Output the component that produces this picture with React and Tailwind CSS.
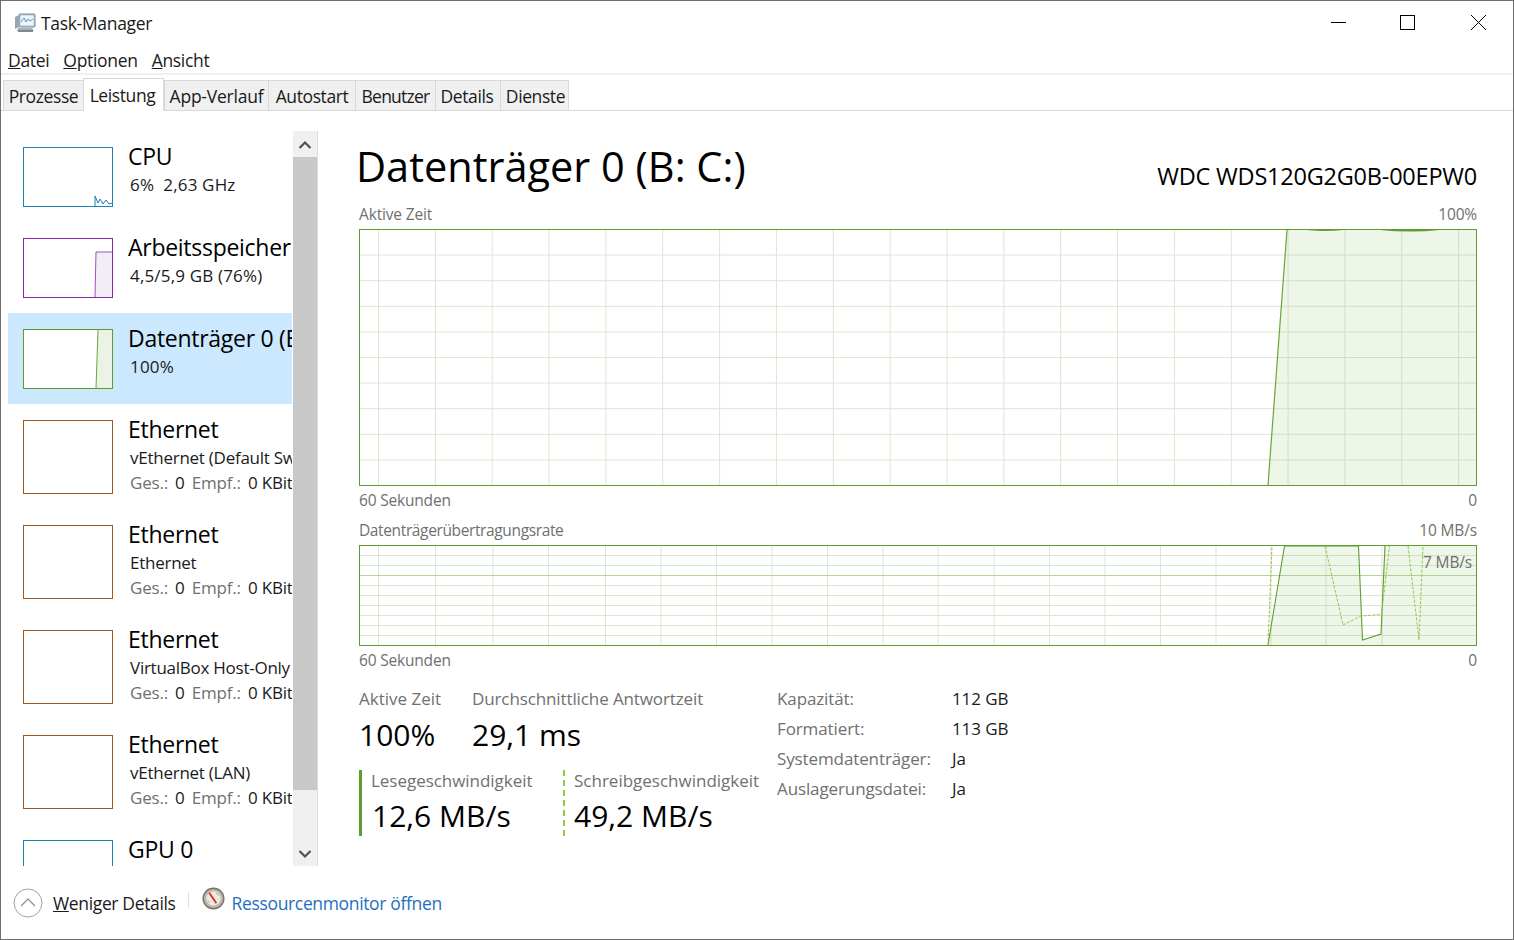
import React from "react";

const topV = Array.from({ length: 20 }, (_, i) => 18.5 + i * 56.85);
const topH = Array.from({ length: 9 }, (_, i) => 25.6 * (i + 1));
const lowV = [18.5, 75.5, 133, 188.5, 245.5, 301, 356.5, 412, 467.5, 523, 578, 634, 689.5, 745, 800.5, 856, 911, 966, 1022];
const lowH = [10, 20, 30, 40, 50, 60, 70, 80, 90];

function Chart1() {
  return (
    <div className="h-[257px] w-[1118px] border border-[#5f9c30]">
      <svg width="1116" height="255" viewBox="0 0 1116 255" className="block">
        {topV.map((x) => (
          <line key={x} x1={x} y1="0" x2={x} y2="255" stroke="#dde5d3" strokeWidth="1" />
        ))}
        {topH.map((y) => (
          <line key={y} x1="0" y1={y - 0.5} x2="1116" y2={y - 0.5} stroke="#dde5d3" strokeWidth="1" />
        ))}
        <polygon points="908,255 927,0 1116,0 1116,255" fill="#88c060" fillOpacity="0.14" />
        <polyline points="908,255 927,0" fill="none" stroke="#6aa63a" strokeWidth="1.2" />
        <path d="M947 0 Q965 2 983 0 Z" fill="#5f9c30" />
        <path d="M1020 0 Q1050 3 1080 0 Z" fill="#5f9c30" />
      </svg>
    </div>
  );
}

function Chart2() {
  return (
    <div className="relative h-[101px] w-[1118px] border border-[#5f9c30]">
      <svg width="1116" height="99" viewBox="0 0 1116 99" className="block">
        {lowV.map((x) => (
          <line key={x} x1={x} y1="0" x2={x} y2="99" stroke="#dde5d3" strokeWidth="1" />
        ))}
        {lowH.map((y) => (
          <line key={y} x1="0" y1={y - 0.5} x2="1116" y2={y - 0.5} stroke={y === 30 ? "#b4d69c" : "#dce6cf"} strokeWidth="1" />
        ))}
        <polygon points="908,99 924.5,0 998.5,0 1002.5,94 1021,88 1025,0 1116,0 1116,99" fill="#88c060" fillOpacity="0.14" />
        <polyline points="908,99 924.5,0 998.5,0 1002.5,94 1021,88 1025,0" fill="none" stroke="#5f9c30" strokeWidth="1.1" />
        <polyline points="908,99 912,0" fill="none" stroke="#8fcb45" strokeWidth="1" strokeDasharray="3 1.5" />
        <polyline points="965,0 983,79 1001,70 1021.5,68.5 1029.5,0" fill="none" stroke="#8fcb45" strokeWidth="1" strokeDasharray="3 1.5" />
        <polyline points="1048,0 1059,94 1063,0" fill="none" stroke="#8fcb45" strokeWidth="1" strokeDasharray="3 1.5" />
      </svg>
      <span className="absolute right-[4px] top-[6px] text-[15.5px] leading-[20px] tracking-[-0.01em] text-[#707070]">7 MB/s</span>
    </div>
  );
}

function Thumb({ color, h = "h-[60px]", children }) {
  return (
    <div className={`mt-[7px] w-[90px] shrink-0 border bg-white ${h}`} style={{ borderColor: color }}>
      <svg width="88" height="100%" className="block h-full">
        {children}
      </svg>
    </div>
  );
}

function Row({ thumb, name, sub, third, selected, tall }) {
  return (
    <div className={`flex w-[284px] shrink-0 overflow-hidden pl-[15px] pt-[9px] ${tall ? "h-[105px]" : "h-[91px]"} ${selected ? "bg-[#cce8ff]" : ""}`}>
      {thumb}
      <div className="ml-[15px] min-w-0 flex-1 whitespace-nowrap">
        <div className="h-[33px] text-[23px] leading-[32px] tracking-[-0.012em] text-black">{name}</div>
        {sub && <div className={`ml-[2px] h-[24px] whitespace-pre text-[17px] leading-[24px] text-[#1a1a1a] ${third ? "tracking-[-0.015em]" : "tracking-[0.01em]"}`}>{sub}</div>}
        {third && (
          <div className="ml-[2px] h-[25px] text-[17px] leading-[25px] tracking-[-0.01em]">
            <span className="text-[#707070]">Ges.:</span>
            <span className="ml-[7px] text-[#1a1a1a]">0</span>
            <span className="ml-[7px] text-[#707070]">Empf.:</span>
            <span className="ml-[7px] text-[#1a1a1a]">0 KBit/s</span>
          </div>
        )}
      </div>
    </div>
  );
}

function TaskIcon() {
  return (
    <svg width="22" height="20" viewBox="0 0 22 20">
      <rect x="5" y="1" width="16" height="13" rx="1" fill="#b9c6d4" stroke="#7d8a98" strokeWidth="1" />
      <rect x="6.5" y="2.5" width="13" height="10" fill="#eef4fa" />
      <polyline points="7,9 10,5 12,9 14,6 16,8 19,6" fill="none" stroke="#4b9bd0" strokeWidth="1" />
      <path d="M1 4 L5 2 V14 L1 16 Z" fill="#9aa4ae" />
      <path d="M4 15 H18 L20 18 H3 Z" fill="#a9b0b8" />
      <rect x="4" y="17" width="15" height="2" fill="#7f8890" />
    </svg>
  );
}

function Gauge() {
  return (
    <svg width="23" height="23" viewBox="0 0 24 24">
      <circle cx="12" cy="12" r="11.5" fill="#77746f" />
      <circle cx="12" cy="12" r="10" fill="#bdb8ae" />
      <circle cx="12" cy="12" r="7.5" fill="#efe9df" />
      <line x1="7.5" y1="6" x2="15" y2="17" stroke="#cf3a30" strokeWidth="2" />
      <line x1="15" y1="6.5" x2="17.5" y2="9" stroke="#8f8f8f" strokeWidth="1" />
      <line x1="6" y1="14" x2="8" y2="16.5" stroke="#a8a8a8" strokeWidth="1" />
    </svg>
  );
}

const tabs = [
  ["Prozesse", "w-[80px]"],
  ["Leistung", "w-[81px] pr-[2px]"],
  ["App-Verlauf", "w-[104px] tracking-[-0.0125em]"],
  ["Autostart", "w-[87px]"],
  ["Benutzer", "w-[80px] tracking-[-0.044em]"],
  ["Details", "w-[65px] pr-[2px]"],
  ["Dienste", "w-[69px] pl-[2px]"],
];

export default function App() {
  return (
    <div className="flex h-[940px] w-[1514px] flex-col overflow-hidden border border-[#6e6e6e] bg-white font-['Open_Sans','Noto_Sans',sans-serif] tracking-[-0.02em] text-black">
      {/* title bar */}
      <div className="flex h-[43px] shrink-0 items-center pl-[13px] pr-[27px]">
        <TaskIcon />
        <span className="ml-[5px] pt-[2px] text-[17.5px] text-[#1a1a1a]">Task-Manager</span>
        <svg width="15" height="15" viewBox="0 0 15 15" className="ml-auto">
          <line x1="0" y1="7.5" x2="15" y2="7.5" stroke="#000" strokeWidth="1" />
        </svg>
        <svg width="15" height="15" viewBox="0 0 15 15" className="ml-[54px]">
          <rect x="0.5" y="0.5" width="14" height="14" fill="none" stroke="#000" strokeWidth="1" />
        </svg>
        <svg width="15" height="15" viewBox="0 0 15 15" className="ml-[56px]">
          <path d="M0 0 L15 15 M15 0 L0 15" stroke="#000" strokeWidth="1" />
        </svg>
      </div>
      {/* menu */}
      <div className="flex h-[31px] shrink-0 items-center border-b-2 border-[#f0f0f0] pl-[7px] pt-[3px] text-[17.5px] leading-[27px] tracking-[-0.018em] text-[#1a1a1a]">
        <span><u>D</u>atei</span>
        <span className="ml-[14px]"><u>O</u>ptionen</span>
        <span className="ml-[14px]"><u>A</u>nsicht</span>
      </div>
      {/* tabs */}
      <div className="flex h-[36px] shrink-0 items-end border-b border-[#d9d9d9] pl-[2px] tracking-[-0.025em]">
        {tabs.map(([t, w]) =>
          t === "Leistung" ? (
            <div key={t} className={`${w} relative top-[1px] flex h-[33px] items-start justify-center border-x border-t border-[#d9d9d9] bg-white pt-[3px] text-[17.5px] leading-[27px] text-[#1a1a1a]`}>
              {t}
            </div>
          ) : (
            <div key={t} className={`${w} flex h-[30px] items-center justify-center border-l border-t border-[#d9d9d9] bg-[#f0f0f0] pt-[2px] text-[17.5px] text-[#1a1a1a] last:border-r`}>
              {t}
            </div>
          )
        )}
      </div>
      {/* body */}
      <div className="flex min-h-0 flex-1">
        <div className="flex w-[317px] shrink-0 flex-col pl-[7px] pt-[20px]">
          <div className="flex h-[735px]">
            <div className="flex w-[284px] flex-col overflow-hidden">
              <Row
                name="CPU"
                sub="6%  2,63 GHz"
                thumb={
                  <Thumb color="#1d7fb5">
                    <polyline points="71,58 71,48 74,55 76,51 79,56 82,52 85,56 88,55" fill="none" stroke="#1d7fb5" strokeWidth="1" />
                  </Thumb>
                }
              />
              <Row
                name="Arbeitsspeicher"
                sub="4,5/5,9 GB (76%)"
                thumb={
                  <Thumb color="#8e24aa">
                    <polygon points="71,58 72,13 88,13 88,58" fill="#f1eef5" />
                    <polyline points="71,58 72,13 88,13" fill="none" stroke="#a64cc4" strokeWidth="1" />
                  </Thumb>
                }
              />
              <Row
                selected
                name="Datenträger 0 (B: C:)"
                sub="100%"
                thumb={
                  <Thumb color="#5f9c30">
                    <polygon points="72,58 74,0 88,0 88,58" fill="#ebf4e4" />
                    <polyline points="72,58 74,0" fill="none" stroke="#6aa63a" strokeWidth="1" />
                  </Thumb>
                }
              />
              <Row tall name="Ethernet" sub="vEthernet (Default Switch)" third thumb={<Thumb color="#a0581c" h="h-[74px]" />} />
              <Row tall name="Ethernet" sub="Ethernet" third thumb={<Thumb color="#a0581c" h="h-[74px]" />} />
              <Row tall name="Ethernet" sub="VirtualBox Host-Only Network" third thumb={<Thumb color="#a0581c" h="h-[74px]" />} />
              <Row tall name="Ethernet" sub="vEthernet (LAN)" third thumb={<Thumb color="#a0581c" h="h-[74px]" />} />
              <Row tall name="GPU 0" thumb={<Thumb color="#1d7fb5" h="h-[74px]" />} />
            </div>
            <div className="ml-[1px] flex w-[25px] flex-col border-r border-[#dcdcdc] bg-[#f0f0f0]">
              <div className="flex h-[26px] items-center justify-center pt-[2px]">
                <svg width="14" height="10" viewBox="0 0 14 10">
                  <path d="M1.5 8 L7 2.5 L12.5 8" fill="none" stroke="#505050" strokeWidth="2.2" />
                </svg>
              </div>
              <div className="h-[633px] bg-[#c8c8c8]" />
              <div className="mt-auto flex h-[26px] items-center justify-center pt-[2px]">
                <svg width="14" height="10" viewBox="0 0 14 10">
                  <path d="M1.5 2 L7 7.5 L12.5 2" fill="none" stroke="#505050" strokeWidth="2.2" />
                </svg>
              </div>
            </div>
          </div>
        </div>
        {/* main */}
        <div className="flex min-w-0 flex-1 flex-col pl-[41px] pr-[36px] pt-[32px]">
          <div className="flex h-[50px] items-center justify-between">
            <span className="-ml-[3px] -mt-[4px] text-[41.5px] leading-[50px] tracking-[0em] text-black">Datenträger 0 (B: C:)</span>
            <span className="pt-[16px] text-[23.5px] leading-[34px] tracking-[-0.0095em] text-black">WDC WDS120G2G0B-00EPW0</span>
          </div>
          <div className="mt-[11px] flex h-[20px] justify-between text-[15.5px] leading-[20px] tracking-[-0.01em] text-[#707070]">
            <span>Aktive Zeit</span>
            <span>100%</span>
          </div>
          <div className="mt-[5px]"><Chart1 /></div>
          <div className="mt-[4px] flex h-[20px] justify-between text-[15.5px] leading-[20px] tracking-[-0.012em] text-[#707070]">
            <span>60 Sekunden</span>
            <span>0</span>
          </div>
          <div className="mt-[10px] flex h-[20px] justify-between text-[15.5px] leading-[20px] tracking-[-0.01em] text-[#707070]">
            <span className="tracking-[-0.024em]">Datenträgerübertragungsrate</span>
            <span>10 MB/s</span>
          </div>
          <div className="mt-[5px]"><Chart2 /></div>
          <div className="mt-[4px] flex h-[20px] justify-between text-[15.5px] leading-[20px] tracking-[-0.012em] text-[#707070]">
            <span>60 Sekunden</span>
            <span>0</span>
          </div>
          <div className="mt-[19px] flex tracking-[-0.007em]">
            <div className="w-[418px] shrink-0">
              <div className="flex">
                <div className="w-[113px]">
                  <div className="h-[20px] text-[17px] leading-[20px] tracking-[0em] text-[#707070]">Aktive Zeit</div>
                  <div className="mt-[4px] h-[44px] text-[30px] leading-[44px] tracking-[0em]">100%</div>
                </div>
                <div>
                  <div className="h-[20px] text-[17px] leading-[20px] text-[#707070]">Durchschnittliche Antwortzeit</div>
                  <div className="mt-[4px] h-[44px] text-[30px] leading-[44px] tracking-[0em]">29,1 ms</div>
                </div>
              </div>
              <div className="mt-[13px] flex h-[66px]">
                <div className="w-[204px] border-l-[3px] border-[#5f9c30] pl-[9px] pt-[1px]">
                  <div className="h-[20px] text-[17px] leading-[20px] tracking-[-0.002em] text-[#707070]">Lesegeschwindigkeit</div>
                  <div className="ml-[1px] mt-[3px] h-[44px] text-[30px] leading-[44px] tracking-[0em]">12,6 MB/s</div>
                </div>
                <div className="border-l-[2px] border-dashed border-[#8fcb45] pl-[9px] pt-[1px]">
                  <div className="h-[20px] whitespace-nowrap text-[17px] leading-[20px] tracking-[0em] text-[#707070]">Schreibgeschwindigkeit</div>
                  <div className="mt-[3px] h-[44px] text-[30px] leading-[44px] tracking-[0em]">49,2 MB/s</div>
                </div>
              </div>
            </div>
            <div className="-mt-[5px] grid h-[120px] grid-cols-[175px_auto] content-start text-[17px] leading-[30px]">
              <span className="text-[#707070]">Kapazität:</span><span className="text-[#1a1a1a]">112 GB</span>
              <span className="text-[#707070]">Formatiert:</span><span className="text-[#1a1a1a]">113 GB</span>
              <span className="text-[#707070]">Systemdatenträger:</span><span className="text-[#1a1a1a]">Ja</span>
              <span className="text-[#707070]">Auslagerungsdatei:</span><span className="text-[#1a1a1a]">Ja</span>
            </div>
          </div>
        </div>
      </div>
      {/* footer */}
      <div className="flex h-[73px] shrink-0 items-start pl-[12px] pt-[22px]">
        <svg width="30" height="30" viewBox="0 0 30 30" className="shrink-0">
          <circle cx="15" cy="15" r="14" fill="none" stroke="#a0a0a0" strokeWidth="1" />
          <path d="M8 18 L15 11 L22 18" fill="none" stroke="#8a8a8a" strokeWidth="1.2" />
        </svg>
        <span className="ml-[10px] text-[17.5px] leading-[30px] tracking-[-0.02em] text-[#1a1a1a]"><u>W</u>eniger Details</span>
        <div className="ml-[12px] mt-[4px] h-[16px] w-px bg-[#e0e0e0]" />
        <div className="ml-[13px] -mt-[1px] shrink-0"><Gauge /></div>
        <span className="ml-[7px] text-[17.5px] leading-[30px] tracking-[-0.02em] text-[#1f6fc0]">Ressourcenmonitor öffnen</span>
      </div>
    </div>
  );
}
